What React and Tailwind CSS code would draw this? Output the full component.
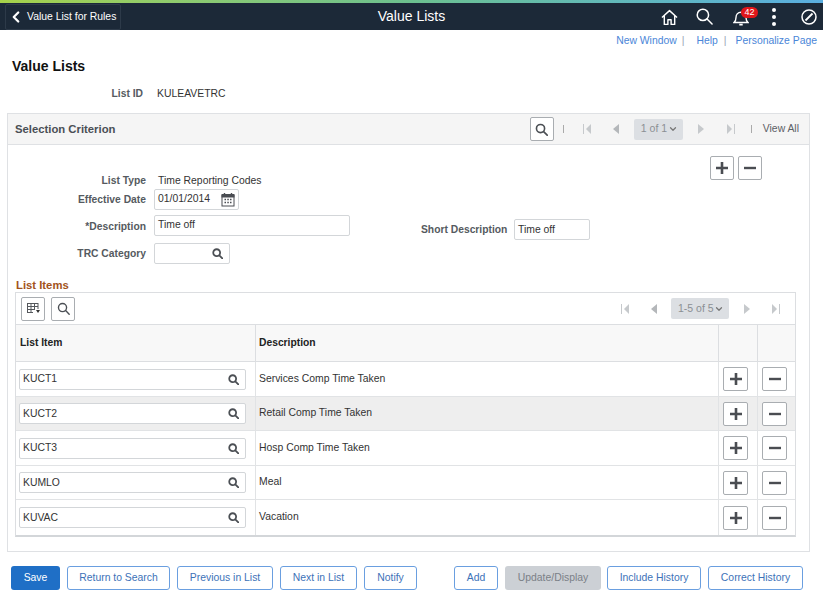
import React from "react";
import { ChevronDown, ChevronLeft } from "lucide-react";

const rows = [
  { item: "KUCT1", description: "Services Comp Time Taken", h: "h-[35px]" },
  { item: "KUCT2", description: "Retail Comp Time Taken", h: "h-[34px]", shaded: true },
  { item: "KUCT3", description: "Hosp Comp Time Taken", h: "h-[35px]" },
  { item: "KUMLO", description: "Meal", h: "h-[34px]" },
  { item: "KUVAC", description: "Vacation", h: "h-[35px]" },
];

const SearchIcon = ({ size = 12, stroke = 2.6, color = "#4b4f54" }) => (
  <svg width={size} height={size} viewBox="0 0 16 16" fill="none" stroke={color} strokeWidth={stroke}>
    <circle cx="6.8" cy="6.8" r="5" />
    <path d="M10.6 10.6 15 15" strokeLinecap="round" />
  </svg>
);

const Plus = () => (
  <svg width="12" height="12" viewBox="0 0 12 12" fill="#4a4d52">
    <path d="M4.7 0h2.6v4.7H12v2.6H7.3V12H4.7V7.3H0V4.7h4.7z" />
  </svg>
);

const Minus = () => (
  <svg width="12" height="12" viewBox="0 0 12 12" fill="#4a4d52">
    <rect x="0" y="4.8" width="12" height="2.4" />
  </svg>
);

const IconButton = ({ children, className = "w-6 h-6" }) => (
  <button className={`${className} flex items-center justify-center bg-white border border-[#a9adb1] rounded-[2px] shrink-0`}>
    {children}
  </button>
);

const First = () => (
  <svg width="9" height="10" viewBox="0 0 9 10" fill="#c6c9cc">
    <rect x="0" y="0" width="1" height="10" />
    <path d="M8 0v10L3 5z" />
  </svg>
);
const Prev = () => (
  <svg width="6" height="10" viewBox="0 0 6 10" fill="#b4b7ba">
    <path d="M6 0v10L0 5z" />
  </svg>
);
const Next = () => (
  <svg width="6" height="10" viewBox="0 0 6 10" fill="#c6c9cc">
    <path d="M0 0v10l6-5z" />
  </svg>
);
const Last = () => (
  <svg width="9" height="10" viewBox="0 0 9 10" fill="#c6c9cc">
    <rect x="8" y="0" width="1" height="10" />
    <path d="M1 0v10l5-5z" />
  </svg>
);

const Pager = ({ label, width }) => (
  <div className={`${width} h-[21px] bg-[#dcdfe3] rounded-[2px] flex items-center justify-between pl-[7px] pr-[5px] text-[10.5px] text-[#8b8f94] whitespace-nowrap`}>
    <span>{label}</span>
    <ChevronDown size={10} strokeWidth={3} color="#777" />
  </div>
);

const labelClass = "text-right font-bold text-[#555a60] text-[10.3px] whitespace-nowrap";
const inputClass = "h-[21px] bg-white border border-[#d3d6d9] rounded-[2px] flex items-center justify-between text-[10.4px] text-[#333] whitespace-nowrap";

const Field = ({ label, labelGap = "mt-[1px]", children }) => (
  <div className="flex items-center">
    <span className={`${labelClass} ${labelGap} w-[138px] shrink-0`}>{label}</span>
    <div className="ml-[8px]">{children}</div>
  </div>
);

const OutlineButton = ({ label, className }) => (
  <button className={`${className} h-[24px] bg-white border border-[#6a9fe0] rounded-[3px] text-[10.4px] text-[#3d72b8] flex items-center justify-center whitespace-nowrap`}>
    {label}
  </button>
);

export default function App() {
  return (
    <div className="w-[823px] h-[600px] overflow-hidden bg-white font-['Liberation_Sans',Arial,sans-serif] flex flex-col">
      <div className="h-[3px] bg-gradient-to-r from-[#a6d24a] via-[#6cc08f] to-[#5aaee0] shrink-0" />

      <header className="h-[27px] bg-[#1c2938] flex items-center relative shrink-0">
        <div className="ml-[5px] w-[116px] h-[26px] mt-[1px] border border-[#2d3a49] rounded-[2px] flex items-center text-white text-[10.4px] whitespace-nowrap shrink-0">
          <ChevronLeft size={18} strokeWidth={3} className="ml-[1px] mr-[2px]" />
          <span>Value List for Rules</span>
        </div>
        <div className="flex-1 text-center text-white text-[14px] -ml-[121px]">Value Lists</div>
        <div className="flex items-center absolute left-[661px] top-0 h-[27px] text-white">
          <svg width="17" height="17" viewBox="0 0 18 18" fill="none" stroke="white" strokeWidth="1.5" strokeLinejoin="round" className="mt-[1px]">
            <path d="M1 9 9 1.7 17 9M3.5 7v9.3h3.8v-5h3.4v5h3.8V7" />
          </svg>
          <svg width="17" height="17" viewBox="0 0 18 18" fill="none" stroke="white" strokeWidth="1.6" className="ml-[18px]">
            <circle cx="7.3" cy="7.3" r="6" />
            <path d="M11.7 11.7 17 17" strokeLinecap="round" />
          </svg>
          <div className="relative ml-[20px] w-[18px] h-[18px]">
            <svg width="16" height="17" viewBox="0 0 16 17" fill="none" stroke="white" strokeWidth="1.4" className="mt-[1px]">
              <path d="M1 13.5c1.6-1.3 2-2.6 2-5C3 5.5 5 3.2 8 3.2s5 2.3 5 5.3c0 2.4.4 3.7 2 5z" />
              <path d="M6.3 15.6h3.4" strokeWidth="1.8" />
            </svg>
            <span className="absolute left-[8px] top-[-1px] w-[17px] h-[11px] rounded-full bg-[#e0161b] text-white text-[9px] leading-[11px] text-center">42</span>
          </div>
          <div className="ml-[21px] flex flex-col gap-[3px]">
            <span className="w-[4px] h-[4px] rounded-full bg-white" />
            <span className="w-[4px] h-[4px] rounded-full bg-white" />
            <span className="w-[4px] h-[4px] rounded-full bg-white" />
          </div>
          <svg width="16" height="16" viewBox="0 0 16 16" fill="none" stroke="white" strokeWidth="1.5" className="ml-[25px]">
            <circle cx="8" cy="8" r="7" />
            <path d="M4.5 11.5 11.5 4.5" strokeWidth="1.8" />
          </svg>
        </div>
      </header>

      <nav className="h-[20px] mt-[1px] flex items-center justify-end pr-[6px] text-[10.4px] text-[#4a86d8] shrink-0 whitespace-nowrap">
        <span>New Window</span>
        <span className="ml-[5px] text-[#9aa6b4]">|</span>
        <span className="ml-[12px]">Help</span>
        <span className="ml-[6px] text-[#9aa6b4]">|</span>
        <span className="ml-[9px]">Personalize Page</span>
      </nav>

      <h1 className="ml-[12px] mt-[7px] text-[14px] leading-[16px] font-bold text-[#111] shrink-0">Value Lists</h1>

      <div className="flex items-center mt-[13px] h-[14px] text-[10.4px] shrink-0">
        <span className="w-[143px] text-right font-bold text-[#555a60] text-[10.3px]">List ID</span>
        <span className="ml-[14px] text-[#333]">KULEAVETRC</span>
      </div>

      <section className="mx-[7px] w-[803px] mt-[12px] h-[439px] border border-[#dfe1e4] shrink-0">
        <div className="h-[31px] bg-[#f5f5f5] border-b border-[#dfe1e4] flex items-center">
          <span className="ml-[7px] text-[11.3px] font-bold text-[#4a4f55]">Selection Criterion</span>
          <div className="ml-auto flex items-center text-[10.4px] whitespace-nowrap">
            <IconButton><SearchIcon size={13} stroke={2} /></IconButton>
            <span className="ml-[9px] w-px h-[8px] bg-[#aaa]" />
            <span className="ml-[19px]"><First /></span>
            <span className="ml-[21px]"><Prev /></span>
            <div className="ml-[15px]"><Pager label="1 of 1" width="w-[49px]" /></div>
            <span className="ml-[15px]"><Next /></span>
            <span className="ml-[22px]"><Last /></span>
            <span className="ml-[16px] w-px h-[8px] bg-[#aaa]" />
            <span className="ml-[11px] mr-[10px] text-[#5c6066]">View All</span>
          </div>
        </div>

        <div className="flex h-[130px] items-start">
          <div className="w-[413px] pt-[29px] flex flex-col shrink-0">
            <div className="flex items-center h-[13px]">
              <span className={`${labelClass} w-[138px]`}>List Type</span>
              <span className="ml-[12px] text-[10.4px] text-[#333]">Time Reporting Codes</span>
            </div>
            <div className="mt-[2px]">
              <Field label="Effective Date">
                <div className={`${inputClass} w-[85px] pl-[3px] pr-[3px]`}>
                  <span className="-mt-[2px]">01/01/2014</span>
                  <svg width="14" height="14" viewBox="0 0 14 14" fill="none" stroke="#4a4d52" strokeWidth="1">
                    <rect x="1" y="2.5" width="12" height="10.5" />
                    <rect x="1" y="1.5" width="12" height="2.5" fill="#4a4d52" />
                    <path d="M3.5 0v2M10.5 0v2" strokeWidth="1.4" />
                    <path d="M3.5 6.5h1.5M6.3 6.5h1.5M9 6.5h1.5M3.5 9.5h1.5M6.3 9.5h1.5M9 9.5h1.5" strokeWidth="1.5" />
                  </svg>
                </div>
              </Field>
            </div>
            <div className="mt-[5px]">
              <Field label="*Description" labelGap="mt-[3px]">
                <div className={`${inputClass} w-[196px] pl-[3px]`}>
                  <span className="-mt-[1px]">Time off</span>
                </div>
              </Field>
            </div>
            <div className="mt-[7px]">
              <Field label="TRC Category">
                <div className={`${inputClass} w-[76px] justify-end pr-[6px]`}>
                  <SearchIcon size={11} />
                </div>
              </Field>
            </div>
          </div>

          <div className="flex items-center mt-[74px] w-[289px] shrink-0">
            <span className="font-bold text-[#555a60] text-[10.3px] w-[93px] whitespace-nowrap">Short Description</span>
            <div className={`${inputClass} w-[76px] pl-[3px]`}>
              <span>Time off</span>
            </div>
          </div>

          <div className="flex gap-[4px] mt-[11px]">
            <IconButton><Plus /></IconButton>
            <IconButton><Minus /></IconButton>
          </div>
        </div>

        <h2 className="ml-[8px] mt-[3px] text-[11.3px] leading-[14px] font-bold text-[#a2531b]">List Items</h2>

        <div className="ml-[7px] w-[781px] border border-[#dcdee1] border-b-2 border-b-[#d3d6d9]">
          <div className="h-[32px] flex items-center border-b border-[#dcdee1]">
            <div className="ml-[5px] flex gap-[6px]">
              <IconButton>
                <svg width="13" height="12" viewBox="0 0 13 12" fill="none" stroke="#55585c" strokeWidth="1">
                  <path d="M0 .5h11M0 3.5h11M0 6.5h8M0 9.5h6M.5 0v10M4 0v10M7.5 0v7M11 0v6" />
                  <path d="M9 7h4l-2 3z" fill="#333" stroke="none" />
                </svg>
              </IconButton>
              <IconButton><SearchIcon size={13} stroke={1.7} /></IconButton>
            </div>
            <div className="ml-auto flex items-center">
              <First />
              <span className="ml-[21px]"><Prev /></span>
              <div className="ml-[14px]"><Pager label="1-5 of 5" width="w-[58px]" /></div>
              <span className="ml-[15px]"><Next /></span>
              <span className="ml-[21px] mr-[15px]"><Last /></span>
            </div>
          </div>

          <div className="h-[37px] grid grid-cols-[240px_463px_39px_1fr] bg-[#f8f8f8] border-b border-[#dcdee1] text-[10.3px] font-bold text-[#222]">
            <div className="flex items-center pl-[4px] border-r border-[#dcdee1]">List Item</div>
            <div className="flex items-center pl-[3px] border-r border-[#dcdee1]">Description</div>
            <div className="border-r border-[#dcdee1]" />
            <div />
          </div>

          {rows.map((row) => (
            <div
              key={row.item}
              className={`${row.h} grid grid-cols-[240px_463px_39px_1fr] border-b border-[#e1e3e5] last:border-b-0 text-[10.4px] text-[#333] ${row.shaded ? "bg-[#eeeeee]" : "bg-white"}`}
            >
              <div className="flex items-center pl-[3px] border-r border-[#e1e3e5]">
                <div className={`${inputClass} w-[227px] pl-[3px] pr-[6px]`}>
                  <span>{row.item}</span>
                  <SearchIcon size={11} />
                </div>
              </div>
              <div className="flex items-center pl-[3px] pb-[1px] border-r border-[#e1e3e5]">{row.description}</div>
              <div className="flex items-center pl-[4px] border-r border-[#e1e3e5]">
                <IconButton className="w-[25px] h-[24px]"><Plus /></IconButton>
              </div>
              <div className="flex items-center pl-[4px]">
                <IconButton className="w-[25px] h-[24px]"><Minus /></IconButton>
              </div>
            </div>
          ))}
        </div>
      </section>

      <footer className="flex items-center mt-[14px] ml-[11px] shrink-0">
        <button className="w-[49px] h-[24px] bg-[#1f6fc6] rounded-[3px] text-white text-[10.4px]">Save</button>
        <OutlineButton label="Return to Search" className="ml-[7px] w-[103px]" />
        <OutlineButton label="Previous in List" className="ml-[7px] w-[96px]" />
        <OutlineButton label="Next in List" className="ml-[7px] w-[77px]" />
        <OutlineButton label="Notify" className="ml-[7px] w-[53px]" />
        <OutlineButton label="Add" className="ml-[37px] w-[44px]" />
        <button className="ml-[7px] w-[96px] h-[24px] bg-[#ccd0d5] rounded-[3px] text-[10.4px] text-[#7b8087]">Update/Display</button>
        <OutlineButton label="Include History" className="ml-[6px] w-[94px]" />
        <OutlineButton label="Correct History" className="ml-[7px] w-[95px]" />
      </footer>
    </div>
  );
}
